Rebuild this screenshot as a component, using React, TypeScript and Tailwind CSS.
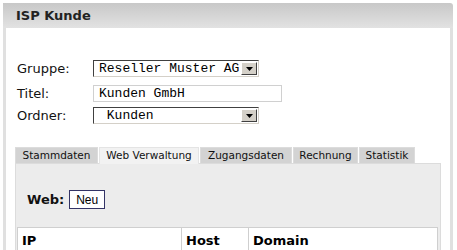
import React from "react";

const verdana = { fontFamily: '"DejaVu Sans", Verdana, sans-serif' };

function Arrow() {
  return (
    <div className="w-[16px] h-[13px] bg-[#d4d0c8] border border-t-white border-l-white border-r-[#404040] border-b-[#404040] flex items-center justify-center">
      <svg width="7" height="4" viewBox="0 0 7 4">
        <path d="M0 0h7L3.5 4z" fill="#000" />
      </svg>
    </div>
  );
}

function Select({ text, width }: { text: string; width: string }) {
  return (
    <div
      className={`${width} h-[17px] bg-white border border-t-[#404040] border-l-[#404040] border-r-[#d4d0c8] border-b-[#d4d0c8] flex items-center justify-between pr-[1px]`}
    >
      <span
        className="text-[13px] leading-none text-black whitespace-pre pl-[5px]"
        style={{ fontFamily: '"Liberation Mono", "Courier New", monospace' }}
      >
        {text}
      </span>
      <Arrow />
    </div>
  );
}

const tabs = [
  { t: "Stammdaten", w: "w-[83px]" },
  { t: "Web Verwaltung", w: "w-[100px]" },
  { t: "Zugangsdaten", w: "w-[92px]" },
  { t: "Rechnung", w: "w-[65px]" },
  { t: "Statistik", w: "w-[56px]" },
];

export default function App() {
  return (
    <div className="w-[457px] h-[250px] bg-white overflow-hidden" style={verdana}>
      <div className="ml-[3px] pt-[3px] w-[450px]">
        <div className="h-[25px] bg-gradient-to-b from-[#c8c8c8] to-[#e2e2e2] rounded-tr-[3px] flex items-center pl-[13px]">
          <span className="text-[13px] font-bold text-[#222]">ISP Kunde</span>
        </div>
        <div className="h-[230px] border-l-[3px] border-r-[3px] border-[#e0e0e0] pl-[9px] pt-[32px]">
          <div className="grid grid-cols-[78px_1fr] text-[13px] text-[#111] items-center">
            <span className="pl-[2px] h-[17px] flex items-center">Gruppe:</span>
            <Select text="Reseller Muster AG" width="w-[166px]" />
            <span className="pl-[2px] h-[17px] mt-[8px] flex items-center">Titel:</span>
            <div className="mt-[8px] w-[189px] h-[17px] border border-[#d0d0d0] bg-white flex items-center pl-[5px]">
              <span
                className="text-[13px] leading-none text-black"
                style={{ fontFamily: '"Liberation Mono", "Courier New", monospace' }}
              >
                Kunden GmbH
              </span>
            </div>
            <span className="pl-[2px] h-[17px] mt-[5px] flex items-center">Ordner:</span>
            <div className="mt-[5px]">
              <Select text=" Kunden" width="w-[166px]" />
            </div>
          </div>

          <div className="mt-[23px] flex gap-[1px] h-[16px] items-end">
            {tabs.map((tab, i) => (
              <div
                key={tab.t}
                className={
                  i === 1
                    ? `${tab.w} h-[17px] bg-[#f2f2f2] border border-b-0 border-[#e4e4e4] text-[10.5px] text-[#111] flex items-center justify-center relative top-[1px] whitespace-nowrap`
                    : `${tab.w} h-[16px] bg-[#d3d3d3] border border-b-0 border-[#dcdcdc] text-[10.5px] text-[#111] flex items-center justify-center whitespace-nowrap`
                }
              >
                {tab.t}
              </div>
            ))}
          </div>
          <div className="w-[426px] h-[100px] bg-[#ececec] border border-[#dcdcdc] px-[1px]">
            <div className="flex items-center h-[54px] pt-[17px] pl-[10px] gap-[5px]">
              <span className="text-[13px] font-bold text-[#111]">Web:</span>
              <div
                className="w-[36px] h-[19px] bg-white border border-[#333366] flex items-center justify-center text-[12px] text-black"
                style={{ fontFamily: '"Liberation Sans", Arial, sans-serif' }}
              >
                Neu
              </div>
            </div>
            <div className="mt-[9px] w-[421px] h-[40px] bg-white border border-[#cfcfcf] grid grid-cols-[164px_67px_1fr]">
              <div className="border-r border-[#cfcfcf] pl-[4px] pt-[3px] text-[13px] font-bold text-black">IP</div>
              <div className="border-r border-[#cfcfcf] pl-[4px] pt-[3px] text-[13px] font-bold text-black">Host</div>
              <div className="pl-[4px] pt-[3px] text-[13px] font-bold text-black">Domain</div>
            </div>
          </div>
        </div>
      </div>
    </div>
  );
}
